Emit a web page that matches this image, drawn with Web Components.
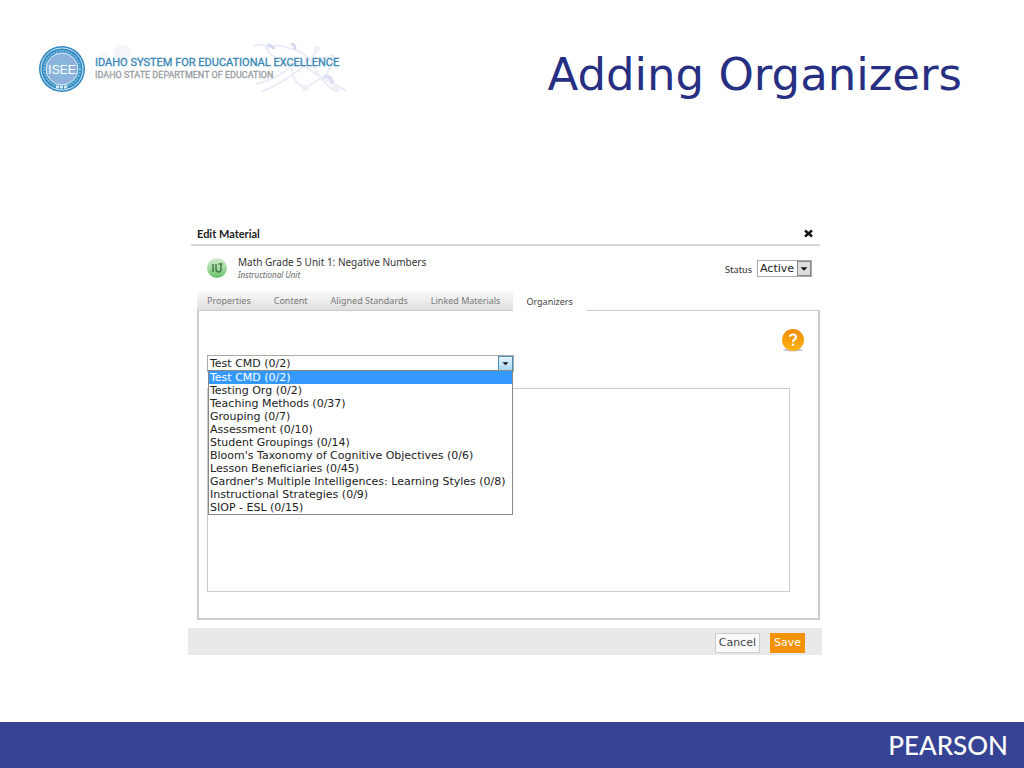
<!DOCTYPE html>
<html lang="en">
<head>
<meta charset="utf-8">
<title>Adding Organizers</title>
<style>
    body {
        margin: 0;
        background: #fff;
        font-family: "DejaVu Sans", sans-serif;
    }
</style>
</head>
<body>
<slide-page>
    <isee-logo slot="logo"></isee-logo>
    <span slot="title">Adding Organizers</span>
    <material-dialog>
        <span slot="caption">Edit Material</span>
        <material-info slot="info">
            Math Grade 5 Unit 1: Negative Numbers
            <span slot="kind">Instructional Unit</span>
        </material-info>
        <status-field slot="info"></status-field>
        <tab-bar slot="tabs" tabs="Properties,Content,Aligned Standards,Linked Materials,Organizers" active="Organizers"></tab-bar>
        <organizer-picker></organizer-picker>
    </material-dialog>
    <span slot="brand">PEARSON</span>
</slide-page>

<script>
class BaseElement extends HTMLElement {
    constructor (html) {
        super()
        this._shadowRoot = this.attachShadow({ mode: 'open' })
        this._shadowRoot.innerHTML = html;
    }
}

class SlidePage extends BaseElement {
    constructor () {
        super(`
<style>
    :host {
        display: flex;
        flex-direction: column;
        min-height: 100vh;
    }

    header {
        display: flex;
        justify-content: space-between;
        align-items: flex-start;
        padding: 40px 62px 0 36px;
        height: 184px;
        box-sizing: border-box;
    }

    h1 {
        margin: 8px 0 0;
        font-size: 45px;
        line-height: 54px;
        font-weight: normal;
        color: #272f83;
    }

    main {
        flex: 1;
        padding: 40px 202px 24px 188px;
    }

    footer {
        display: flex;
        justify-content: flex-end;
        align-items: center;
        height: 46px;
        padding: 0 16px;
        background: #364395;
        color: #fff;
        font: 500 26px/46px Lato, sans-serif;
    }
</style>
<header>
    <slot name="logo"></slot>
    <h1><slot name="title"></slot></h1>
</header>
<main><slot></slot></main>
<footer><slot name="brand"></slot></footer>
`)
    }
}

class IseeLogo extends BaseElement {
    constructor () {
        super(`
<style>
    :host {
        display: grid;
        width: 320px;
        height: 58px;
    }

    .art, .lockup {
        grid-area: 1 / 1;
    }

    .lockup {
        display: flex;
        gap: 7px;
        align-items: center;
        font-family: Roboto, sans-serif;
        white-space: nowrap;
    }

    p {
        margin: 0;
        font-size: 11px;
        line-height: 13px;
        color: #3585b5;
        -webkit-text-stroke: 0.3px;
    }

    .sub {
        font-size: 9px;
        color: #9a9ea1;
    }
</style>
<svg class="art" viewBox="0 0 320 58" fill="none" aria-hidden="true">
    <g fill="#f4f6fa">
        <circle cx="86" cy="14" r="9"/>
        <circle cx="68" cy="17" r="4"/>
        <circle cx="104" cy="20" r="4"/>
    </g>
    <g stroke="#eaedf7" stroke-width="2">
        <path d="M218 6q8-4 14 2q10-5 20 0q16 2 24 15q6 15 21 27"/>
        <path d="M230 8q8 14 31 18q16-5 20-18"/>
        <path d="M220 44q20-4 35-18q17-8 41-9"/>
        <path d="M225 52q24-10 43-26q18 13 43 25"/>
        <path d="M255 26q1 16 14 22l21-13 9-18"/>
        <path d="M290 35q8 1 10 13"/>
        <path d="M255 4q5 1 4 6M231 5q5 0 7 4" stroke="#d6d9f0" stroke-width="3"/>
        <path d="M288 36q8 1 8 8" stroke="#d9dcf3" stroke-width="3"/>
    </g>
    <g fill="#eef0f8">
        <circle cx="255" cy="26" r="3"/>
        <circle cx="281" cy="9" r="3"/>
        <circle cx="269" cy="48" r="3"/>
        <circle cx="300" cy="48" r="4"/>
        <circle cx="296" cy="17" r="3"/>
    </g>
</svg>
<div class="lockup">
    <svg width="52" height="52" viewBox="0 0 52 52" role="img" aria-label="ISEE seal">
        <circle cx="26" cy="26" r="23" fill="#2f88c1"/>
        <circle cx="26" cy="26" r="21" fill="none" stroke="#d7eaf5" stroke-width="1"/>
        <circle cx="26" cy="26" r="18" fill="none" stroke="#78b7dc" stroke-width="2" stroke-dasharray="2 1"/>
        <circle cx="26" cy="26" r="16" fill="#86b7dd" stroke="#e6f1f9" stroke-width="1"/>
        <circle cx="26" cy="26" r="12" fill="none" stroke="#9ba9dc" stroke-width="4" stroke-dasharray="2 2"/>
        <path d="M20 44h12" stroke="#d7eaf5" stroke-width="3" stroke-dasharray="3 1"/>
        <text x="26" y="31" text-anchor="middle" font-family="Liberation Sans, sans-serif" font-size="12" fill="#fff">ISEE</text>
    </svg>
    <div>
        <p>IDAHO SYSTEM FOR EDUCATIONAL EXCELLENCE</p>
        <p class="sub">IDAHO STATE DEPARTMENT OF EDUCATION</p>
    </div>
</div>
`)
    }
}

class MaterialDialog extends BaseElement {
    constructor () {
        super(`
<style>
    :host {
        display: block;
        color: #333;
        font-family: Lato, sans-serif;
    }

    .caption {
        display: flex;
        justify-content: space-between;
        align-items: center;
        margin: 0 2px 0 3px;
        padding: 0 7px 0 6px;
        height: 20px;
        border-bottom: 2px solid #d6d6d6;
    }

    h2 {
        margin: 0;
        font-size: 11px;
        line-height: 20px;
        color: #222;
    }

    .close {
        display: flex;
        padding: 0 0 2px;
        border: 0;
        background: none;
    }

    .info {
        display: flex;
        justify-content: space-between;
        align-items: center;
        height: 45px;
        padding: 0 10px 0 19px;
    }

    .body {
        margin: 0 2px 8px 9px;
    }

    .footer {
        display: flex;
        justify-content: flex-end;
        align-items: center;
        gap: 10px;
        height: 27px;
        box-sizing: border-box;
        padding: 2px 17px 0;
        background: #e9e9e9;
    }

    .footer button {
        height: 20px;
        padding: 0 3px;
        border: 1px solid #ccc;
        background: #f9f9f9;
        color: #444;
        font: 11px/18px "DejaVu Sans", sans-serif;
    }

    .footer .save {
        border-color: #f39200;
        background: #f39200;
        color: #fff;
    }
</style>
<section>
    <div class="caption">
        <h2><slot name="caption"></slot></h2>
        <button class="close" aria-label="Close">
            <svg width="9" height="9" viewBox="0 0 9 9"><path d="M1 1.5l7 6M8 1.5l-7 6" stroke="#111" stroke-width="2.4"/></svg>
        </button>
    </div>
    <div class="info"><slot name="info"></slot></div>
    <div class="body">
        <slot name="tabs"></slot>
        <slot></slot>
    </div>
    <div class="footer">
        <button>Cancel</button>
        <button class="save">Save</button>
    </div>
</section>
`)
    }
}

class MaterialInfo extends BaseElement {
    constructor () {
        super(`
<style>
    :host {
        display: flex;
        align-items: center;
        gap: 10px;
        font-family: "Noto Sans", sans-serif;
    }

    .name {
        font-size: 10px;
        line-height: 13px;
    }

    .kind {
        font-size: 8px;
        line-height: 12px;
        font-style: italic;
        color: #666;
    }
</style>
<svg width="21" height="21" viewBox="0 0 21 21" aria-hidden="true">
    <defs>
        <linearGradient id="g" x2="0" y2="1">
            <stop offset="0" stop-color="#d3edcf"/>
            <stop offset=".5" stop-color="#a5dba2"/>
            <stop offset="1" stop-color="#64c169"/>
        </linearGradient>
    </defs>
    <circle cx="10" cy="10" r="10" fill="url(#g)"/>
    <path d="M6 6v8M9 6v5q0 3 2.500 3t2.500-3V6M11.500 6h4" fill="none" stroke="#467548" stroke-width="1.500"/>
</svg>
<div>
    <div class="name"><slot></slot></div>
    <div class="kind"><slot name="kind"></slot></div>
</div>
`)
    }
}

class StatusField extends BaseElement {
    constructor () {
        super(`
<style>
    :host {
        display: flex;
        align-items: center;
        gap: 5px;
        font-size: 10px;
    }

    .field {
        display: grid;
        grid-template-columns: 1fr 14px;
        width: 55px;
        height: 17px;
        box-sizing: border-box;
        border: 1px solid #aaa;
    }

    select {
        grid-area: 1 / 1 / 2 / 3;
        appearance: none;
        margin: 0;
        padding: 0 14px 0 2px;
        border: 0;
        border-radius: 0;
        background: none;
        color: #222;
        font: 11px/15px "DejaVu Sans", sans-serif;
    }

    svg {
        grid-area: 1 / 2;
        box-sizing: border-box;
        border: 1px solid #888;
        background: #ddd;
        pointer-events: none;
    }
</style>
<label for="status">Status</label>
<div class="field">
    <select id="status"><option>Active</option></select>
    <svg width="14" height="15" viewBox="0 0 14 15"><path d="M3 6h8L7 10z" fill="#111"/></svg>
</div>
`)
    }
}

class TabBar extends BaseElement {
    constructor () {
        super(`
<style>
    :host {
        display: flex;
        height: 19px;
    }

    nav {
        display: flex;
    }

    button {
        padding: 0 13px 0 10px;
        border: 0;
        background: linear-gradient(#fbfbfb, #dedede);
        color: #777;
        font: 9px/19px "Noto Sans", sans-serif;
    }

    button.active {
        padding: 0 13px;
        background: #fff;
        color: #444;
        height: 21px;
        position: relative;
    }
</style>
<nav></nav>
`)
    }

    connectedCallback () {
        const nav = this._shadowRoot.querySelector('nav');
        nav.replaceChildren();
        this.getAttribute('tabs').split(',').forEach(name => {
            const button = document.createElement('button');
            button.textContent = name;
            if (name === this.getAttribute('active')) {
                button.className = 'active';
            }
            nav.appendChild(button);
        });
    }
}

class OrganizerPicker extends BaseElement {
    constructor () {
        super(`
<style>
    :host {
        display: block;
        box-sizing: border-box;
        min-height: 310px;
        padding: 17px 13px 26px 8px;
        border: 2px solid #ccc;
        border-width: 1px 2px 2px;
    }

    .help {
        display: flex;
        margin-left: auto;
        padding: 0;
        border: 0;
        background: none;
    }

    .picker {
        position: relative;
        width: 307px;
        margin-top: 1px;
    }

    .box {
        display: grid;
        grid-template-columns: 1fr 15px;
        height: 17px;
        box-sizing: border-box;
        border: 1px solid #aaa;
    }

    select {
        grid-area: 1 / 1 / 2 / 3;
        appearance: none;
        margin: 0;
        padding: 0 15px 0 2px;
        border: 0;
        border-radius: 0;
        background: none;
        color: #222;
        font: 11px/15px "DejaVu Sans", sans-serif;
    }

    .box svg {
        grid-area: 1 / 2;
        box-sizing: border-box;
        border: 1px solid #4d8fb5;
        background: linear-gradient(#e2f3fc, #a9d8f2);
        pointer-events: none;
    }

    ul {
        position: absolute;
        z-index: 1;
        top: 15px;
        left: 1px;
        right: 1px;
        margin: 0;
        padding: 0;
        list-style: none;
        border: 1px solid #888;
        background: #fff;
        color: #222;
        font: 11px/13px "DejaVu Sans", sans-serif;
        white-space: nowrap;
    }

    li {
        padding: 0 1px;
    }

    li[aria-selected="true"] {
        background: #3399ff;
        color: #fff;
    }

    .results {
        height: 202px;
        margin: 16px 15px 0 0;
        border: 1px solid #ccc;
    }
</style>
<button class="help" aria-label="Help">
    <svg width="24" height="26" viewBox="0 0 24 26">
        <defs>
            <linearGradient id="g" x2="0" y2="1">
                <stop offset="0" stop-color="#f28c05"/>
                <stop offset="1" stop-color="#fdb515"/>
            </linearGradient>
        </defs>
        <ellipse cx="12" cy="22" rx="10" ry="1.500" fill="#c3c3d6"/>
        <circle cx="12" cy="12" r="11" fill="url(#g)"/>
        <path d="M8.800 8.600Q9.500 6.500 12 6.500q3 0 3 2.500 0 1.500-1.500 2.400T12 14" fill="none" stroke="#fff" stroke-width="2.200"/>
        <circle cx="12" cy="16.800" r="1.300" fill="#fff"/>
    </svg>
</button>
<div class="picker">
    <div class="box">
        <select aria-label="Organizer"></select>
        <svg width="15" height="15" viewBox="0 0 15 15"><path d="M4 6h7L7.500 9.500z" fill="#111"/></svg>
    </div>
    <ul role="listbox" aria-label="Organizers"></ul>
</div>
<div class="results"></div>
`)
        const organizers = [
            'Test CMD (0/2)',
            'Testing Org (0/2)',
            'Teaching Methods (0/37)',
            'Grouping (0/7)',
            'Assessment (0/10)',
            'Student Groupings (0/14)',
            "Bloom's Taxonomy of Cognitive Objectives (0/6)",
            'Lesson Beneficiaries (0/45)',
            "Gardner's Multiple Intelligences: Learning Styles (0/8)",
            'Instructional Strategies (0/9)',
            'SIOP - ESL (0/15)'
        ];
        const select = this._shadowRoot.querySelector('select');
        const list = this._shadowRoot.querySelector('ul');
        organizers.forEach((name, i) => {
            select.add(new Option(name));
            const item = document.createElement('li');
            item.setAttribute('role', 'option');
            item.setAttribute('aria-selected', i === 0);
            item.textContent = name;
            list.appendChild(item);
        });
    }
}

customElements.define('slide-page', SlidePage);
customElements.define('isee-logo', IseeLogo);
customElements.define('material-dialog', MaterialDialog);
customElements.define('material-info', MaterialInfo);
customElements.define('status-field', StatusField);
customElements.define('tab-bar', TabBar);
customElements.define('organizer-picker', OrganizerPicker);
</script>
</body>
</html>
